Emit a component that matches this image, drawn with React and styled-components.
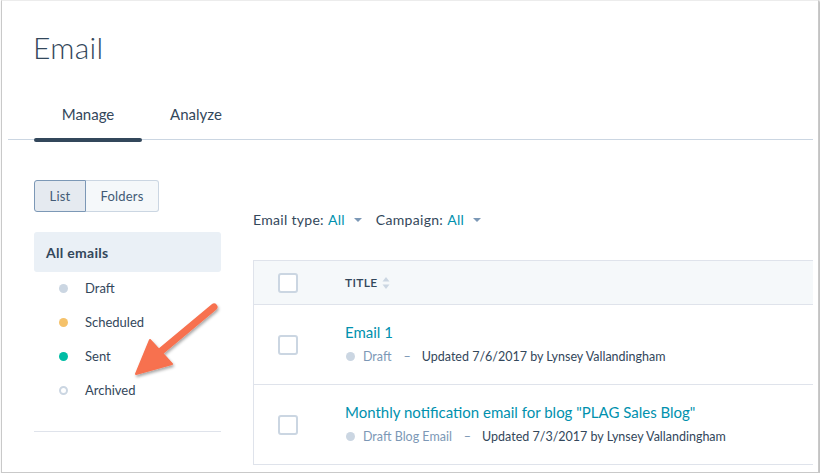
import React from 'react'
import styled, { createGlobalStyle } from 'styled-components'

const GlobalStyle = createGlobalStyle`
  html, body { margin: 0; padding: 0; background: #ffffff; }
  body { font-family: Lato, "Open Sans", sans-serif; color: #33475b; }
`

const Frame = styled.div`
  position: relative;
  box-sizing: border-box;
  width: 818px;
  height: 473px;
  margin-left: 1px;
  border: 1px solid #c9c9c9;
  border-top-color: #ececec;
  box-shadow: 1px 1px 2px rgba(0,0,0,0.35);
  background: #fff;
  overflow: hidden;
`

const Header = styled.div`
  padding: 27px 0 0 31px;
`

const Title = styled.h1`
  margin: 0;
  font-size: 30px;
  font-weight: 300;
  line-height: 38px;
  letter-spacing: 0.3px;
  color: #33475b;
`

const TabBar = styled.div`
  display: flex;
  margin: 39px 5px 0 6px;
  padding-left: 26px;
  border-bottom: 1px solid #cbd6e2;
`

const Tab = styled.div`
  position: relative;
  width: ${p => p.$w}px;
  text-align: center;
  font-size: 15px;
  padding-bottom: 16px;
  color: #33475b;
  &::after {
    content: '';
    display: ${p => (p.$active ? 'block' : 'none')};
    position: absolute;
    left: 0;
    right: 0;
    bottom: -3px;
    height: 4px;
    border-radius: 2px;
    background: #33475b;
  }
`

const Body = styled.div`
  display: flex;
  padding: 40px 0 0 32px;
`

const Sidebar = styled.div`
  width: 187px;
  flex-shrink: 0;
`

const Toggle = styled.div`
  display: flex;
  width: 125px;
`

const ToggleBtn = styled.div`
  box-sizing: border-box;
  height: 32px;
  display: flex;
  align-items: center;
  justify-content: center;
  font-size: 13px;
  letter-spacing: 0.2px;
  color: #425b76;
  width: ${p => p.$w}px;
  background: ${p => (p.$active ? '#e5eaf0' : '#f5f8fa')};
  border: 1px solid ${p => (p.$active ? '#7c98b6' : '#cbd6e2')};
  border-radius: ${p => (p.$first ? '3px 0 0 3px' : '0 3px 3px 0')};
  ${p => !p.$first && 'border-left: none;'}
`

const AllEmails = styled.div`
  margin-top: 20px;
  height: 40px;
  display: flex;
  align-items: center;
  padding-left: 12px;
  background: #eaf0f6;
  border-radius: 3px;
  font-weight: 700;
  font-size: 14px;
  letter-spacing: 0.3px;
`

const StatusList = styled.div`
  padding: 0 0 24px 25px;
  margin-top: -1px;
  border-bottom: 1px solid #dfe3eb;
`

const StatusItem = styled.div`
  display: flex;
  align-items: center;
  height: 34px;
  font-size: 13px;
  color: #33475b;
`

const Dot = styled.span`
  box-sizing: border-box;
  width: 9px;
  height: 9px;
  border-radius: 50%;
  margin-right: 17px;
  background: ${p => (p.$hollow ? 'transparent' : p.$color)};
  border: ${p => (p.$hollow ? `2px solid ${p.$color}` : 'none')};
`

const Main = styled.div`
  flex: 1;
  padding-left: 32px;
  padding-right: 5px;
`

const Filters = styled.div`
  display: flex;
  align-items: center;
  margin-top: 31px;
  font-size: 14px;
  letter-spacing: 0.3px;
  color: #33475b;
  gap: 14px;
`

const Filter = styled.span`
  display: inline-flex;
  align-items: center;
`

const FilterValue = styled.span`
  color: #0091ae;
  margin-left: 4px;
`

const Caret = styled.span`
  width: 0;
  height: 0;
  border-left: 4px solid transparent;
  border-right: 4px solid transparent;
  border-top: 4px solid #7c98b6;
  margin-left: 9px;
`

const Table = styled.div`
  margin-top: 32px;
  border-left: 1px solid #dfe3eb;
`

const HeadRow = styled.div`
  display: flex;
  align-items: center;
  height: 43px;
  background: #f5f8fa;
  border-top: 1px solid #dfe3eb;
  border-bottom: 1px solid #dfe3eb;
`

const Row = styled.div`
  display: flex;
  align-items: center;
  height: 79px;
  border-bottom: 1px solid #dfe3eb;
`

const CheckCell = styled.div`
  width: 91px;
  padding-left: 24px;
  box-sizing: border-box;
  flex-shrink: 0;
`

const Checkbox = styled.div`
  box-sizing: border-box;
  width: 20px;
  height: 20px;
  border: 2px solid #cbd6e2;
  border-radius: 3px;
  background: #fff;
`

const HeadLabel = styled.div`
  display: flex;
  align-items: center;
  font-size: 12px;
  font-weight: 600;
  color: #33475b;
  letter-spacing: 0.3px;
`

const SortIcon = styled.svg`
  margin-left: 5px;
`

const Cell = styled.div`
  display: flex;
  flex-direction: column;
  gap: 8px;
  margin-top: -3px;
`

const EmailLink = styled.div`
  font-size: 15px;
  color: #0091ae;
`

const Meta = styled.div`
  display: flex;
  align-items: center;
  font-size: 12.5px;
  color: #33475b;
`

const MetaStatus = styled.span`
  color: #7c98b6;
  display: inline-flex;
  align-items: center;
`

const MetaDot = styled.span`
  width: 9px;
  height: 9px;
  border-radius: 50%;
  background: #cbd6e2;
  margin: 0 8px 0 1px;
`

const Dash = styled.span`
  color: #7c98b6;
  margin: 0 11px 0 12px;
`

const Arrow = styled.svg`
  position: absolute;
  left: 120px;
  top: 293px;
  pointer-events: none;
`

const statuses = [
  { label: 'Draft', color: '#cbd6e2' },
  { label: 'Scheduled', color: '#f5c26b' },
  { label: 'Sent', color: '#00bda5' },
  { label: 'Archived', color: '#cbd6e2', hollow: true },
]

const emails = [
  { title: 'Email 1', status: 'Draft', updated: 'Updated 7/6/2017 by Lynsey Vallandingham' },
  { title: 'Monthly notification email for blog "PLAG Sales Blog"', status: 'Draft Blog Email', updated: 'Updated 7/3/2017 by Lynsey Vallandingham' },
]

export default function App() {
  return (
    <>
      <GlobalStyle />
      <Frame>
        <Header>
          <Title>Email</Title>
        </Header>
        <TabBar>
          <Tab $w={108} $active>Manage</Tab>
          <Tab $w={108}>Analyze</Tab>
        </TabBar>
        <Body>
          <Sidebar>
            <Toggle>
              <ToggleBtn $w={52} $first $active>List</ToggleBtn>
              <ToggleBtn $w={73}>Folders</ToggleBtn>
            </Toggle>
            <AllEmails>All emails</AllEmails>
            <StatusList>
              {statuses.map(s => (
                <StatusItem key={s.label}>
                  <Dot $color={s.color} $hollow={s.hollow} />
                  {s.label}
                </StatusItem>
              ))}
            </StatusList>
          </Sidebar>
          <Main>
            <Filters>
              <Filter>Email type:<FilterValue>All</FilterValue><Caret /></Filter>
              <Filter>Campaign:<FilterValue>All</FilterValue><Caret /></Filter>
            </Filters>
            <Table>
              <HeadRow>
                <CheckCell><Checkbox /></CheckCell>
                <HeadLabel>
                  TITLE
                  <SortIcon width="8" height="14" viewBox="0 0 8 14">
                    <path d="M4 1 L7.5 5.5 H0.5 Z" fill="#cbd6e2" />
                    <path d="M4 13 L7.5 8.5 H0.5 Z" fill="#cbd6e2" />
                  </SortIcon>
                </HeadLabel>
              </HeadRow>
              {emails.map(e => (
                <Row key={e.title}>
                  <CheckCell><Checkbox /></CheckCell>
                  <Cell>
                    <EmailLink>{e.title}</EmailLink>
                    <Meta>
                      <MetaStatus><MetaDot />{e.status}</MetaStatus>
                      <Dash>–</Dash>
                      {e.updated}
                    </Meta>
                  </Cell>
                </Row>
              ))}
            </Table>
          </Main>
        </Body>
        <Arrow width="110" height="95" viewBox="0 0 110 95">
          <defs>
            <filter id="sh" x="-20%" y="-20%" width="140%" height="140%">
              <feDropShadow dx="1" dy="2" stdDeviation="1.5" floodColor="#000" floodOpacity="0.35" />
            </filter>
          </defs>
          <g filter="url(#sh)">
            <line x1="92" y1="13" x2="38" y2="58" stroke="#f7714f" strokeWidth="7" strokeLinecap="round" />
            <path d="M14 80 L28 46 L50 70 Z" fill="#f7714f" strokeLinejoin="round" stroke="#f7714f" strokeWidth="2" />
          </g>
        </Arrow>
      </Frame>
    </>
  )
}
